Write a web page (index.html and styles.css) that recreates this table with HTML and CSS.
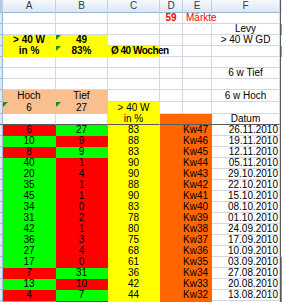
FILE: index.html
```html
<!DOCTYPE html>
<html>
<head>
<meta charset="utf-8">
<link rel="stylesheet" href="styles.css">
</head>
<body>
<div class="sheet">
  <div class="row hdr"><div class="rh corner"></div><div>A</div><div>B</div><div>C</div><div>D</div><div>E</div><div>F</div><div class="fz"></div><div class="g"></div></div>

  <div class="row"><div class="rh"></div><div></div><div></div><div></div><div class="b rt">59</div><div class="l rt">Märkte</div><div></div><div class="fz"></div><div class="g"></div></div>
  <div class="row"><div class="rh"></div><div></div><div></div><div></div><div></div><div></div><div>Levy</div><div class="fz"></div><div class="g grn"></div></div>
  <div class="row"><div class="rh"></div><div class="yel b">&gt; 40 W</div><div class="yel b tri">49</div><div></div><div></div><div></div><div>&gt; 40 W GD</div><div class="fz"></div><div class="g"></div></div>
  <div class="row"><div class="rh"></div><div class="yel b">in %</div><div class="yel b tri">83%</div><div class="yel b l cw">Ø 40 Wochen</div><div></div><div></div><div></div><div class="fz"></div><div class="g grn"></div></div>
  <div class="row"><div class="rh"></div><div></div><div></div><div></div><div></div><div></div><div></div><div class="fz"></div><div class="g"></div></div>
  <div class="row"><div class="rh"></div><div></div><div></div><div></div><div></div><div></div><div>6 w Tief</div><div class="fz"></div><div class="g"></div></div>
  <div class="row"><div class="rh"></div><div></div><div></div><div></div><div></div><div></div><div></div><div class="fz"></div><div class="g"></div></div>
  <div class="row tall"><div class="rh"></div><div class="pch">Hoch</div><div class="pch">Tief</div><div></div><div></div><div></div><div>6 w Hoch</div><div class="fz"></div><div class="g"></div></div>
  <div class="row tall"><div class="rh"></div><div class="pch tri">6</div><div class="pch tri">27</div><div class="yel">&gt; 40 W</div><div></div><div></div><div></div><div class="fz"></div><div class="g"></div></div>
  <div class="row frz"><div class="rh"></div><div></div><div></div><div class="yel">in %</div><div class="org"></div><div class="org"></div><div>Datum</div><div class="fz"></div><div class="g"></div></div>

  <div class="row"><div class="rh"></div><div class="red">6</div><div class="grn">27</div><div class="yel">83</div><div class="org"></div><div class="org kw">Kw47</div><div class="dt">26.11.2010</div><div class="fz"></div><div class="g"></div></div>
  <div class="row"><div class="rh"></div><div class="grn">10</div><div class="red">9</div><div class="yel">88</div><div class="org"></div><div class="org kw">Kw46</div><div class="dt">19.11.2010</div><div class="fz"></div><div class="g"></div></div>
  <div class="row"><div class="rh"></div><div class="red">8</div><div class="grn">9</div><div class="yel">83</div><div class="org"></div><div class="org kw">Kw45</div><div class="dt">12.11.2010</div><div class="fz"></div><div class="g"></div></div>
  <div class="row"><div class="rh"></div><div class="grn">40</div><div class="red">1</div><div class="yel">90</div><div class="org"></div><div class="org kw">Kw44</div><div class="dt">05.11.2010</div><div class="fz"></div><div class="g"></div></div>
  <div class="row"><div class="rh"></div><div class="grn">20</div><div class="red">4</div><div class="yel">90</div><div class="org"></div><div class="org kw">Kw43</div><div class="dt">29.10.2010</div><div class="fz"></div><div class="g"></div></div>
  <div class="row"><div class="rh"></div><div class="grn">35</div><div class="red">1</div><div class="yel">88</div><div class="org"></div><div class="org kw">Kw42</div><div class="dt">22.10.2010</div><div class="fz"></div><div class="g"></div></div>
  <div class="row"><div class="rh"></div><div class="grn">45</div><div class="red">1</div><div class="yel">90</div><div class="org"></div><div class="org kw">Kw41</div><div class="dt">15.10.2010</div><div class="fz"></div><div class="g"></div></div>
  <div class="row"><div class="rh"></div><div class="grn">34</div><div class="red">0</div><div class="yel">83</div><div class="org"></div><div class="org kw">Kw40</div><div class="dt">08.10.2010</div><div class="fz"></div><div class="g"></div></div>
  <div class="row"><div class="rh"></div><div class="grn">31</div><div class="red">2</div><div class="yel">78</div><div class="org"></div><div class="org kw">Kw39</div><div class="dt">01.10.2010</div><div class="fz"></div><div class="g"></div></div>
  <div class="row"><div class="rh"></div><div class="grn">42</div><div class="red">1</div><div class="yel">80</div><div class="org"></div><div class="org kw">Kw38</div><div class="dt">24.09.2010</div><div class="fz"></div><div class="g"></div></div>
  <div class="row"><div class="rh"></div><div class="grn">36</div><div class="red">3</div><div class="yel">75</div><div class="org"></div><div class="org kw">Kw37</div><div class="dt">17.09.2010</div><div class="fz"></div><div class="g"></div></div>
  <div class="row"><div class="rh"></div><div class="grn">27</div><div class="red">4</div><div class="yel">68</div><div class="org"></div><div class="org kw">Kw36</div><div class="dt">10.09.2010</div><div class="fz"></div><div class="g"></div></div>
  <div class="row"><div class="rh"></div><div class="grn">17</div><div class="red">0</div><div class="yel">61</div><div class="org"></div><div class="org kw">Kw35</div><div class="dt">03.09.2010</div><div class="fz"></div><div class="g org"></div></div>
  <div class="row"><div class="rh"></div><div class="red">7</div><div class="grn">31</div><div class="yel">36</div><div class="org"></div><div class="org kw">Kw34</div><div class="dt">27.08.2010</div><div class="fz"></div><div class="g org"></div></div>
  <div class="row"><div class="rh"></div><div class="grn">13</div><div class="red">10</div><div class="yel">42</div><div class="org"></div><div class="org kw">Kw33</div><div class="dt">20.08.2010</div><div class="fz"></div><div class="g org"></div></div>
  <div class="row"><div class="rh"></div><div class="red">4</div><div class="grn">7</div><div class="yel">44</div><div class="org"></div><div class="org kw">Kw32</div><div class="dt">13.08.2010</div><div class="fz"></div><div class="g org"></div></div>
  <div class="row"><div class="rh"></div><div class="grn"></div><div class="red"></div><div class="yel"></div><div class="org"></div><div class="org"></div><div></div><div class="fz"></div><div class="g org"></div></div>
</div>
</body>
</html>
```
FILE: styles.css
```css
html, body {
  margin: 0;
  padding: 0;
  background: #ffffff;
}
body {
  font-family: "Liberation Sans Narrow", "Liberation Sans", Arial, sans-serif;
  font-size: 10px;
  color: #000;
  overflow: hidden;
}
.sheet {
  width: 282px;
  height: 302px;
  overflow: hidden;
}
.row {
  display: grid;
  grid-template-columns: 3px 53px 52px 52px 23px 29px 68px 1px 1px;
  height: 11px;
}
.row > div {
  box-sizing: border-box;
  border-right: 1px solid #d0d7e5;
  border-bottom: 1px solid #d0d7e5;
  white-space: nowrap;
  line-height: 10px;
  text-align: center;
  position: relative;
  min-width: 0;
}
.row.tall { height: 12px; }
.row.tall > div { line-height: 11px; }

.row > .rh {
  background: #dfe7f2;
  border-right-color: #9eb6ce;
  border-bottom-color: #9eb6ce;
}
.row > .fz {
  border: 0;
  background: #5a5a5a;
}
.row > .g {
  border: 0;
  background: #fff;
}

.row.hdr { height: 13px; }
.row.hdr > div {
  background: linear-gradient(#f7f9fc, #dce6f2);
  border-right-color: #c3d2e4;
  border-bottom-color: #9eb6ce;
  line-height: 12px;
  color: #2f3d4c;
  font-family: "Liberation Sans", Arial, sans-serif;
  font-size: 10px;
}
.row.hdr > .corner { background: #b4c9e3; }
.row.hdr > .fz { background: #5a5a5a; }

.b { font-weight: bold; font-family: "Liberation Sans", Arial, sans-serif; }
.l { text-align: left !important; padding-left: 3px; }
.cw { letter-spacing: -0.5px; }
.rt { color: #ff0000; }
.kw { text-align: right !important; padding-right: 3px; }
.dt { text-align: right !important; padding-right: 1px; }

.row > .red { background: #ff0000; border-color: #ff0000; }
.row > .grn { background: #00ff00; border-color: #00ff00; }
.row > .yel { background: #ffff00; border-color: #ffff00; }
.row > .org { background: #ff6600; border-color: #ff6600; }
.row > .pch { background: #fabf8f; border-color: #fabf8f; }

.row.frz > div { border-bottom-color: #5a5a5a; }

.tri::before {
  content: "";
  position: absolute;
  left: 0;
  top: 0;
  border-top: 5px solid #1f8a1f;
  border-right: 5px solid transparent;
}
```
